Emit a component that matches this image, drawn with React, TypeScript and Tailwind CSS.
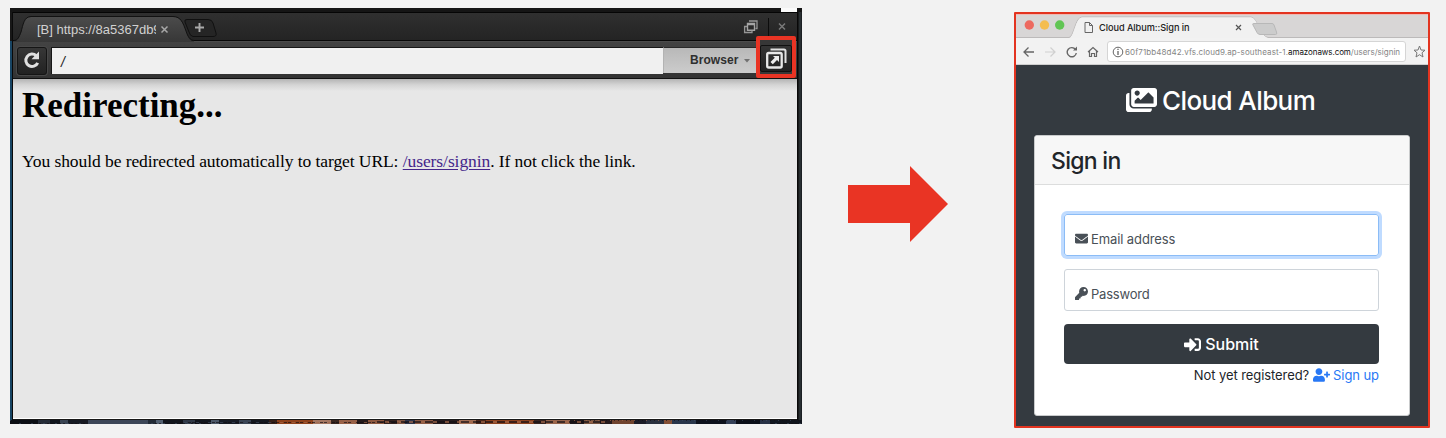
import type { ReactNode } from 'react';
import { FaImages, FaEnvelope, FaKey, FaSignInAlt, FaUserPlus } from 'react-icons/fa';

const sans = "font-['Liberation_Sans',Arial,sans-serif]";
const inter = "font-['Inter',sans-serif]";

const skyline: [number, string][] = [
  [28, '#0b0e14'], [12, '#252c38'], [10, '#10141c'], [8, '#394453'], [12, '#151a23'], [8, '#171a22'], [60, '#3c4657'],
  [8, '#222a36'], [7, '#536071'], [20, '#11151c'], [12, '#303947'], [16, '#12161e'], [8, '#4c5868'], [20, '#171c26'],
  [12, '#394353'], [18, '#141820'], [8, '#362018'], [36, '#8f421c'], [18, '#a47762'], [8, '#38251e'], [18, '#966047'],
  [11, '#24191a'], [16, '#8d583f'], [13, '#33221f'], [8, '#7e5644'], [10, '#2f354a'], [18, '#8b5944'], [26, '#261b1e'],
  [17, '#a16e55'], [10, '#4d2719'], [48, '#8b411e'], [12, '#382420'], [24, '#94644c'], [14, '#1d1619'], [16, '#76533f'],
  [12, '#25191b'], [22, '#70432e'], [12, '#1c1c27'], [18, '#2a303e'], [8, '#855036'], [24, '#29364b'], [30, '#0d111c'],
  [10, '#344057'], [24, '#0a0e17'], [10, '#283246'], [10, '#101620'],
];

function Skyline() {
  let x = 0;
  return (
    <svg className="h-[4px] w-full" viewBox="0 0 792 4" preserveAspectRatio="none">
      <rect width="792" height="4" fill="#10141c" />
      {skyline.map(([w, fill], i) => {
        const left = x;
        x += w;
        return <rect key={i} x={left} width={w} height="4" fill={fill} />;
      })}
      {Array.from({ length: 230 }, (_, i) => {
        const px = (i * 197) % 792;
        const plain = px > 76 && px < 138;
        if (plain) return null;
        const warm = px > 266 && px < 660;
        const fill = i % 3 === 0 ? (warm ? '#a5694a' : '#3d4a5d') : '#120e12';
        return <rect key={`d${i}`} x={px} y={(i * 7) % 4} width={1 + ((i * 5) % 4)} height={1 + (i % 2)} fill={fill} opacity="0.65" />;
      })}
    </svg>
  );
}

function Text({ className, children }: { className: string; children: ReactNode }) {
  return <span className={`whitespace-pre ${className}`}>{children}</span>;
}

function EditorWindow() {
  return (
    <section className="mt-[8px] ml-[10px] flex h-[416px] w-[792px] shrink-0 flex-col bg-[#171717]">
      <div className="flex h-[4px] shrink-0 justify-end bg-[#151515] pr-[5px]"><div className="w-[16px] bg-[#fbfbfb]" /></div>
      <div className="flex min-h-0 flex-1">
        <div className="mt-[29px] w-[2px] bg-[#174463]" />
        <div className="w-px bg-[#090909]" />
        <div className="flex w-[784px] flex-col">
          <div className="relative flex h-[30px] shrink-0 bg-gradient-to-b from-[#303030] to-[#232323]">
            <svg className="absolute inset-0" width="784" height="30" viewBox="0 0 784 30" fill="none">
              <defs><linearGradient id="tabfill" x1="0" y1="0" x2="0" y2="1"><stop stopColor="#4b4b4b" /><stop offset="1" stopColor="#373737" /></linearGradient></defs>
              <path d="M0 .5H784" stroke="#050505" />
              <path d="M0 28.5H784" stroke="#080808" />
              <path d="M0 29.5H784" stroke="#4b4b4b" />
              <path d="M0 30V29C5 29 6 26 8 21C10 14 10 5 18 5H160C168 5 170 11 173 19C175 25 176 29 181 29V30Z" fill="url(#tabfill)" />
              <path d="M1 28.5C5 28 6 25 8 20C10 13 11 4.5 18 4.5H160C168 4.5 170 11 173 19C175 25 177 28 181 28.5" stroke="#111" />
              <path d="M174 7.500H195Q199 7.500 200 11L203 21Q204 24.500 200 24.500H180Q177 24 176 20L172 10Q171 7.500 174 7.500Z" fill="#252525" stroke="#101010" />
              <path d="M182 15.500H191M186.500 11V20" stroke="#aaa" strokeWidth="1.900" />
              <path d="M148.500 14.500L154.500 20.500M154.500 14.500L148.500 20.500" stroke="#a8a8a8" strokeWidth="1.500" />
              <path d="M755.500 6V28" stroke="#0c0c0c" />
              <path d="M766 11.500L772 17.500M772 11.500L766 17.500" stroke="#797979" strokeWidth="1.500" />
              <path d="M736 9H744V16.500H742.500" stroke="#969696" strokeWidth="1.300" />
              <path d="M734.500 11.500H741.500V18.300H734.500ZM734.500 12.500H741.500" stroke="#a4a4a4" strokeWidth="1.400" />
              <path d="M734 14.500H731.600V20.500H739V18.500" stroke="#969696" strokeWidth="1.300" />
            </svg>
            <Text className={`relative mt-[9px] ml-[24px] h-[17px] w-[119px] overflow-hidden text-[13px] leading-[17px] text-[#d1d1d1] ${sans}`}>[B] https://8a5367db9</Text>
          </div>
          <div className="flex h-[37px] shrink-0 border-b border-b-[#111] bg-gradient-to-b from-[#434343] to-[#333] pt-[5px]">
            <button className="ml-[4px] flex h-[28px] w-[30px] items-center justify-center rounded-[3px] border border-[#151515] bg-gradient-to-b from-[#373737] to-[#222] pb-[2px] shadow-[0_0_0_1px_#484848]">
              <svg width="20" height="20" viewBox="0 0 20 20" fill="none"><path d="M14.300 5.800A6.200 6.200 0 1 0 15.700 12.800" stroke="#e0e0e0" strokeWidth="3" /><path d="M17 1.500V9.200H9.500L12.300 6.300L14.500 4Z" fill="#e0e0e0" /></svg>
            </button>
            <div className="ml-[4px] flex h-[27px] w-[612px] items-center border-t border-l border-t-[#171717] border-l-[#171717] bg-[#f0f0f0] pl-[9px]">
              <Text className={`pt-[2px] text-[14px] leading-[18px] text-[#222] italic ${sans}`}>/</Text>
            </div>
            <button className="flex h-[26px] w-[94px] items-center border-t border-l border-t-[#292929] border-l-[#b3b3b3] bg-gradient-to-b from-[#b8b8b8] to-[#cccccc] pb-[2px] pl-[26px]">
              <Text className={`text-[12px] leading-[16px] font-bold tracking-[0.060px] text-[#2f2f2f] ${sans}`}>Browser</Text>
              <svg className="mt-[1px] ml-[6px]" width="6" height="5" viewBox="0 0 6 5"><path d="M0 1H6L3 4.500Z" fill="#717171" /></svg>
            </button>
            <div className="relative z-10 -mt-[11px] -ml-[1px] flex h-[42px] w-[40px] shrink-0 items-end rounded-[2px] border-[4px] border-[#e93424] bg-[#373737] pb-[2px]">
              <div className="flex h-[27px] w-full items-center justify-center rounded-[2px] border border-[#111] bg-gradient-to-b from-[#343434] to-[#222]">
                <svg width="24" height="23" viewBox="0 0 24 23" fill="none">
                  <path d="M6.500 2.500H20Q21.500 2.500 21.500 4V16" stroke="#e1e1e1" strokeWidth="2" />
                  <rect x="3.200" y="6" width="14.500" height="14.500" rx="1.500" stroke="#e8e8e8" strokeWidth="2.300" />
                  <path d="M9 9H15V15L13 13L8.800 17.200L6.500 15L10.800 10.800Z" fill="#eee" />
                </svg>
              </div>
            </div>
          </div>
          <div className="relative h-[340px] border-b border-white bg-[#e7e7e7] font-['Liberation_Serif',serif] text-black">
            <div className="absolute inset-x-0 top-0 h-[12px] bg-gradient-to-b from-[#b4b4b4] via-[#d5d5d5] to-[#e7e7e7]" />
            <h1 className="relative pt-[7px] pl-[9px] text-[35px] leading-[40px] font-bold whitespace-nowrap">Redirecting...</h1>
            <p className="mt-[25px] pl-[9px] text-[17.500px] leading-[20px] tracking-[-0.075px] whitespace-nowrap">You should be redirected automatically to target URL: <a href="#signin" className="text-[#44258a] underline underline-offset-2">/users/signin</a>. If not click the link.</p>
          </div>
        </div>
        <div className="w-[5px] border-l border-[#080808] bg-gradient-to-r from-[#101010] via-[#30383b] to-[#15181b]" />
      </div>
      <Skyline />
    </section>
  );
}

function BrowserChrome() {
  return (
    <>
      <div className="relative flex h-[24px] shrink-0 bg-[#d8d6d6]">
        <svg className="absolute inset-0" width="412" height="24" viewBox="0 0 412 24" fill="none">
          <path d="M0 .5H412" stroke="#f0b9b4" />
          <path d="M0 23.500H53C58 23 59 3 66 3H235C241 3 245 23.500 252 23.500H412" fill="#f1f1f1" stroke="#bcbaba" />
          <path d="M54 24C58 22 60 3.500 66 3.500H235C241 3.500 245 23 252 24Z" fill="#f1f1f1" />
          <circle cx="13.300" cy="11" r="4.700" fill="#ed695f" /><circle cx="28.500" cy="11" r="4.700" fill="#f4bd4f" /><circle cx="43.700" cy="11" r="4.700" fill="#61c554" />
          <path d="M69 8.500H73.500L76.500 11.500V18.500H69ZM73.500 8.500V11.500H76.500" stroke="#666" />
          <path d="M220 11L225 16M225 11L220 16" stroke="#555" strokeWidth="1.200" />
          <path d="M238 9.500H256Q257.500 9.500 258 11L260.500 18Q261.500 20.500 259.500 20.500H244Q242 20.500 241 18.500L237 11Q236 9.500 238 9.500Z" fill="#ccc" stroke="#b8b8b8" />
        </svg>
        <Text className={`relative mt-[7px] ml-[83px] text-[9.200px] leading-[13px] font-medium tracking-[-0.060px] text-[#222] ${inter}`}>Cloud Album::Sign in</Text>
      </div>
      <div className="flex h-[27px] shrink-0 items-center border-b border-b-[#cfcfcf] bg-[#f2f2f2]">
        <svg width="90" height="26" viewBox="0 0 90 26" fill="none">
          <path d="M18 14H8.500M12.500 9.500L8 14L12.500 18.500" stroke="#666" strokeWidth="1.300" />
          <path d="M29 14H38.500M34.500 9.500L39 14L34.500 18.500" stroke="#d0d0d0" strokeWidth="1.200" />
          <path d="M59.500 11.500A4.600 4.600 0 1 0 60.300 15" stroke="#666" strokeWidth="1.400" /><path d="M61 8.500V12.500H57Z" fill="#666" />
          <path d="M72 14L77 9.500L82 14M73.500 13V18.500H75.500V15.500H78.500V18.500H80.500V13" stroke="#666" strokeWidth="1.200" />
        </svg>
        <div className="mt-[1px] ml-[1px] flex h-[21px] w-[299px] items-center rounded-[3px] border border-[#d5d5d5] bg-white">
          <svg className="ml-[4px] shrink-0" width="12" height="12" viewBox="0 0 12 12" fill="none"><circle cx="6" cy="6" r="4.800" stroke="#666" /><path d="M6 5V9M6 2.800V4" stroke="#666" strokeWidth="1.300" /></svg>
          <Text className={`mt-[1px] ml-[1px] text-[8px] leading-[12px] tracking-[0.100px] text-[#858585] ${inter}`}>60f71bb48d42.vfs.cloud9.ap-southeast-1.<span className="tracking-[-0.080px] text-[#101010]">amazonaws.com</span><span className="tracking-[0.020px]">/users/signin</span></Text>
        </div>
        <svg className="mt-[1px] ml-[7px] shrink-0" width="13" height="13" viewBox="0 0 13 13" fill="none"><path d="M6.500 1L8 5L12 5.200L9 7.800L10 12L6.500 9.700L3 12L4 7.800L1 5.200L5 5Z" stroke="#777" /></svg>
      </div>
    </>
  );
}

function AlbumWindow() {
  return (
    <section className={`mt-[12px] ml-[66px] flex h-[416px] w-[416px] shrink-0 flex-col overflow-hidden rounded-[1px] border-[2px] border-[#e33420] bg-[#343a40] ${inter}`}>
      <BrowserChrome />
      <header className="flex h-[70px] shrink-0 items-center pl-[110px] text-white">
        <FaImages className="h-[30px] w-[31px]" />
        <h1 className="ml-[5px] pt-[1px] text-[26px] leading-[32px] font-medium tracking-[-0.600px] whitespace-nowrap">Cloud Album</h1>
      </header>
      <div className="ml-[18px] flex h-[281px] w-[376px] shrink-0 flex-col rounded-[3px] border border-[#c9cbcc] bg-white">
        <div className="flex h-[49px] shrink-0 items-center rounded-t-[2px] border-b border-[#dcdddd] bg-[#f7f7f7] pl-[16px]">
          <h2 className="pt-[2px] text-[23px] leading-[28px] font-medium tracking-[-0.700px] text-[#212529]">Sign in</h2>
        </div>
        <form className="flex flex-col pt-[29px] pr-[30px] pl-[29px]">
          <div className="flex h-[42px] items-center rounded-[3px] border border-[#8bbcf6] pt-[7px] pl-[10px] text-[#495057] shadow-[0_0_0_3px_#bfdbff]">
            <FaEnvelope className="h-[13px] w-[13px]" /><Text className="ml-[3px] text-[13px] leading-[18px] tracking-[-0.100px]">Email address</Text>
          </div>
          <div className="mt-[13px] flex h-[42px] items-center rounded-[3px] border border-[#ced4da] pt-[7px] pl-[10px] text-[#495057]">
            <FaKey className="h-[13px] w-[13px]" /><Text className="ml-[3px] text-[13px] leading-[18px] tracking-[-0.200px]">Password</Text>
          </div>
          <button type="button" className="mt-[13px] flex h-[40px] items-center justify-center rounded-[4px] bg-[#343a40] text-white">
            <FaSignInAlt className="h-[17px] w-[17px]" /><Text className="ml-[4px] text-[16px] leading-[20px] font-medium">Submit</Text>
          </button>
          <div className="mt-[2px] flex h-[18px] items-center justify-end text-[13px] leading-[18px] tracking-[-0.080px] text-[#212529]">
            <Text className="">Not yet registered?</Text>
            <a href="#signup" className="ml-[4px] flex items-center text-[#2878f5]"><FaUserPlus className="h-[14px] w-[17px]" /><Text className="ml-[3px]">Sign up</Text></a>
          </div>
        </form>
      </div>
    </section>
  );
}

export default function App() {
  return (
    <main className="flex h-[438px] w-[1446px] items-start overflow-hidden bg-[#f2f2f2]">
      <EditorWindow />
      <svg className="mt-[166px] ml-[46px] shrink-0" width="100" height="76" viewBox="0 0 100 76"><path d="M0 19H62V0L100 38L62 76V57H0Z" fill="#e93424" /></svg>
      <AlbumWindow />
    </main>
  );
}
